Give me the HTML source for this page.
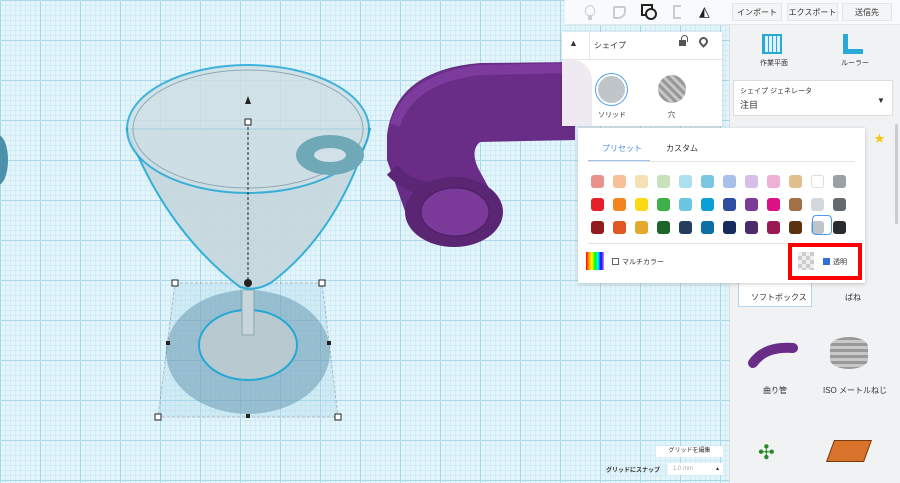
<!DOCTYPE html>
<html><head><meta charset="utf-8"><style>
*{box-sizing:border-box;margin:0;padding:0}
body{width:900px;height:483px;overflow:hidden;position:relative;font-family:"Liberation Sans","Noto Sans CJK JP",sans-serif;color:#333;font-size:8px}
#grid{position:absolute;left:0;top:0;width:729px;height:483px;background-color:#e3f4fa;
background-image:linear-gradient(#a9d8eb 1px,transparent 1px),linear-gradient(90deg,#a9d8eb 1px,transparent 1px),linear-gradient(#d0ecf6 1px,transparent 1px),linear-gradient(90deg,#d0ecf6 1px,transparent 1px);
background-size:40px 40px,40px 40px,5px 5px,5px 5px}
.abs{position:absolute}
.btn{position:absolute;top:3px;height:18px;background:#f4f5f6;border:1px solid #e2e4e6;font-size:8px;display:flex;align-items:center;justify-content:center;color:#333}
.sw{position:absolute;width:13px;height:13px;border-radius:3px}
</style></head><body>
<div id="grid"></div>
<svg class="abs" style="left:0;top:0" width="729" height="483">
<ellipse cx="248" cy="352" rx="82" ry="62" fill="#4f7f99" opacity=".55"/>
<polygon points="175,283 322,283 338,417 158,417" fill="#a8d8ec" opacity=".3" stroke="#333" stroke-dasharray="3,2"/>
<ellipse cx="248" cy="345" rx="49" ry="35" fill="#b9c9d0" stroke="#23a9d6" stroke-width="2"/>
<rect x="242" y="290" width="12" height="45" fill="#c8d6dc" stroke="#8aa" />
<path d="M127,129 Q165,230 240,287 Q256,292 272,282 Q340,230 370,129 Z" fill="#c6d7de" opacity=".9" stroke="#23a9d6" stroke-width="2"/>
<ellipse cx="248" cy="129" rx="121" ry="64" fill="#cfdfe5" opacity=".85" stroke="#23a9d6" stroke-width="2"/>
<ellipse cx="248" cy="129" rx="115" ry="59" fill="none" stroke="#8fa9b4"/>
<ellipse cx="330" cy="155" rx="34" ry="20" fill="#6fa9b8"/><ellipse cx="330" cy="155" rx="16" ry="7" fill="#d1e1e7"/>
<line x1="248" y1="122" x2="248" y2="283" stroke="#222" stroke-dasharray="3,2"/>
<rect x="245" y="119" width="6" height="6" fill="#fff" stroke="#222"/>
<path d="M248,96 l-3,8 h6z" fill="#222"/>
<circle cx="248" cy="283" r="4" fill="#222"/>
<g fill="#fff" stroke="#222"><rect x="172" y="280" width="6" height="6"/><rect x="319" y="280" width="6" height="6"/><rect x="335" y="414" width="6" height="6"/><rect x="155" y="414" width="6" height="6"/></g>
<g fill="#222"><rect x="166" y="341" width="4" height="4"/><rect x="327" y="341" width="4" height="4"/><rect x="246" y="414" width="4" height="4"/></g>
<path d="M406,214 L387,160 L387,135 Q395,70 480,63 L575,62 L575,140 L480,142 Q470,150 478,168 L502,212 Z" fill="#6a2d87"/>
<path d="M395,125 Q410,78 480,70 L575,68" stroke="#7d3b9d" stroke-width="10" fill="none"/>
<path d="M392,170 Q420,200 470,185" stroke="#5c2676" stroke-width="14" fill="none"/>
<ellipse cx="454" cy="212" rx="49" ry="35" fill="#5a2573"/>
<ellipse cx="455" cy="212" rx="34" ry="24" fill="#7b3a99" stroke="#4a1d60"/>
<ellipse cx="-2" cy="160" rx="10" ry="25" fill="#4a90a8"/>
</svg>
<!-- toolbar -->
<div class="abs" style="left:565px;top:0;width:335px;height:25px;background:#f9fafb;border-bottom:1px solid #e6e6e6"></div>
<div class="abs" style="left:585px;top:5px;width:10px;height:11px;border:1.5px solid #ccc;border-radius:50% 50% 40% 40%"></div>
<div class="abs" style="left:588px;top:16px;width:4px;height:4px;background:#ccc"></div>
<div class="abs" style="left:613px;top:6px;width:13px;height:13px;border:2px solid #ccc;border-radius:2px 2px 8px 2px"></div>
<div class="abs" style="left:641px;top:4px;width:12px;height:12px;border:2px solid #222"></div>
<div class="abs" style="left:645px;top:8px;width:12px;height:12px;border:2px solid #222;border-radius:50%;background:#f9fafb"></div>
<div class="abs" style="left:673px;top:5px;width:8px;height:14px;border:2px solid #ccc;border-right:none"></div>
<div class="abs" style="left:699px;top:3px;font-size:14px;color:#222">◭</div>
<div class="btn" style="left:732px;width:50px">インポート</div>
<div class="btn" style="left:787px;width:51px">エクスポート</div>
<div class="btn" style="left:842px;width:50px">送信先</div>
<!-- sidebar -->
<div class="abs" style="left:729px;top:25px;width:171px;height:458px;background:#f1f2f4;border-left:1px solid #e0e0e0"></div>
<div class="abs" style="left:762px;top:34px;width:20px;height:20px;border:2px solid #29a9d6;background:repeating-linear-gradient(90deg,#29a9d6 0 1px,#dff3fb 1px 4px)"></div>
<div class="abs" style="left:760px;top:58px;font-size:7px">作業平面</div>
<div class="abs" style="left:843px;top:34px;width:20px;height:20px;border-left:5px solid #29a9d6;border-bottom:5px solid #29a9d6"></div>
<div class="abs" style="left:841px;top:58px;font-size:7px">ルーラー</div>
<div class="abs" style="left:733px;top:80px;width:160px;height:36px;background:#fff;border:1px solid #ddd"></div>
<div class="abs" style="left:740px;top:86px;font-size:7px">シェイプ ジェネレータ</div>
<div class="abs" style="left:740px;top:98px;font-size:9px">注目</div>
<div class="abs" style="left:877px;top:96px;font-size:8px">▼</div>
<div class="abs" style="left:874px;top:130px;font-size:11px;color:#f5c518">★</div>
<div class="abs" style="left:895px;top:124px;width:3px;height:100px;background:#ccc;border-radius:2px"></div>
<div class="abs" style="left:738px;top:275px;width:74px;height:32px;background:#fff;border:1px solid #b9d3ea"></div>
<div class="abs" style="left:755px;top:268px;width:30px;height:10px;background:#c9a820;border-radius:4px"></div>
<div class="abs" style="left:751px;top:292px;font-size:8px">ソフトボックス</div>
<div class="abs" style="left:845px;top:292px;font-size:8px">ばね</div>
<svg class="abs" style="left:745px;top:338px" width="60" height="35"><path d="M8,25 Q20,8 48,10" stroke="#6a2d87" stroke-width="10" fill="none" stroke-linecap="round"/></svg>
<div class="abs" style="left:830px;top:337px;width:38px;height:32px;border-radius:50%/30%;background:repeating-linear-gradient(#999 0 3px,#c8c8c8 3px 6px)"></div>
<div class="abs" style="left:763px;top:385px;font-size:8px">曲り管</div>
<div class="abs" style="left:823px;top:385px;font-size:8px">ISO メートルねじ</div>
<div class="abs" style="left:758px;top:440px;font-size:20px;color:#2a8a2a">✣</div>
<div class="abs" style="left:830px;top:440px;width:38px;height:22px;background:#d9722a;transform:skewX(-20deg);border:1px solid #7a3a10"></div>
<!-- grid controls -->
<div class="abs" style="left:656px;top:446px;width:67px;height:11px;background:#fff;font-size:6px;text-align:center;line-height:11px">グリッドを編集</div>
<div class="abs" style="left:606px;top:465px;font-size:6px;font-weight:bold">グリッドにスナップ</div>
<div class="abs" style="left:668px;top:463px;width:55px;height:12px;background:#fff;font-size:6px;color:#aaa;line-height:12px;padding-left:5px">1.0 mm <span style="float:right;margin-right:4px;color:#333">▴</span></div>
<!-- shape panel -->
<div class="abs" style="left:562px;top:32px;width:160px;height:94px;background:#fff;box-shadow:0 1px 3px rgba(0,0,0,.15)"></div>
<div class="abs" style="left:562px;top:59px;width:160px;height:1px;background:#e6e6e6"></div>
<div class="abs" style="left:589px;top:32px;width:1px;height:27px;background:#e6e6e6"></div>
<div class="abs" style="left:569px;top:38px;font-size:9px">▲</div>
<div class="abs" style="left:594px;top:40px;font-size:8px">シェイプ</div>
<div class="abs" style="left:679px;top:40px;width:7px;height:6px;background:#555"></div>
<div class="abs" style="left:681px;top:35px;width:7px;height:7px;border:1.5px solid #555;border-bottom:none;border-radius:4px 4px 0 0"></div>
<div class="abs" style="left:699px;top:37px;width:9px;height:9px;border:2px solid #555;border-radius:50% 50% 50% 0;transform:rotate(-45deg)"></div>
<div class="abs" style="left:562px;top:60px;width:30px;height:66px;background:#efe9f1;border-radius:0 20px 0 0"></div>
<div class="abs" style="left:596px;top:74px;width:31px;height:31px;border-radius:50%;background:#c0c5c9;border:2px solid #fff;box-shadow:0 0 0 1px #4b9be8"></div>
<div class="abs" style="left:598px;top:110px;font-size:7px">ソリッド</div>
<div class="abs" style="left:658px;top:75px;width:28px;height:28px;border-radius:50%;background:repeating-linear-gradient(45deg,#999 0 3px,#c8c8c8 3px 6px)"></div>
<div class="abs" style="left:668px;top:110px;font-size:7px">穴</div>
<!-- color popup -->
<div class="abs" style="left:578px;top:128px;width:287px;height:155px;background:#fff;box-shadow:0 1px 4px rgba(0,0,0,.2)"></div>
<div class="abs" style="left:602px;top:143px;font-size:8px;color:#4a8ee0">プリセット</div>
<div class="abs" style="left:666px;top:143px;font-size:8px">カスタム</div>
<div class="abs" style="left:588px;top:161px;width:267px;height:1px;background:#e4e4e4"></div>
<div class="abs" style="left:588px;top:160px;width:62px;height:1px;background:#9ec2ea"></div>
<div class="abs" style="left:588px;top:243px;width:267px;height:1px;background:#e4e4e4"></div>
<div id="sw"></div>
<script>
var rows=[["#e8928b","#f7c096","#f5e0b5","#c8e2bd","#abe0f0","#7bc7e2","#a8c0ea","#d6bee6","#eeb0d6","#e2c08e","#fff","#9ba0a4"],
["#e5202a","#f3851f","#fbd914","#40b04a","#6bc6e2","#0b9fd8","#2e4ea0","#7b3b98","#dd1086","#a27045","#d5d8da","#646a6e"],
["#921b20","#e35724","#e3a92e","#1d6529","#253d5c","#0c6fa6","#172c5c","#4d2a6a","#9a1955","#5a3210","#c0c5c9","#2a2c2e"]];
var h="";rows.forEach(function(r,i){r.forEach(function(c,j){h+='<div class="sw" style="left:'+(591+j*22)+'px;top:'+(175+i*23)+'px;background:'+c+(c=="#fff"?';border:1px solid #ddd':'')+'"></div>'})});
document.getElementById("sw").innerHTML=h;
</script>
<div class="abs" style="left:812px;top:215px;width:20px;height:20px;border:1px solid #4b9be8;border-radius:4px"></div>
<div class="abs" style="left:586px;top:252px;width:18px;height:18px;background:linear-gradient(90deg,red,orange,yellow,lime,cyan,blue,violet)"></div>
<div class="abs" style="left:612px;top:258px;width:7px;height:7px;border:1px solid #666"></div>
<div class="abs" style="left:622px;top:257px;font-size:7px">マルチカラー</div>
<div class="abs" style="left:788px;top:243px;width:74px;height:37px;border:4px solid #f00"></div>
<div class="abs" style="left:798px;top:252px;width:16px;height:18px;background:repeating-conic-gradient(#ccc 0 25%,#eee 0 50%) 0 0/8px 8px"></div>
<div class="abs" style="left:823px;top:258px;width:7px;height:7px;background:#2f6fd6"></div>
<div class="abs" style="left:833px;top:257px;font-size:7px">透明</div>
</body></html>
